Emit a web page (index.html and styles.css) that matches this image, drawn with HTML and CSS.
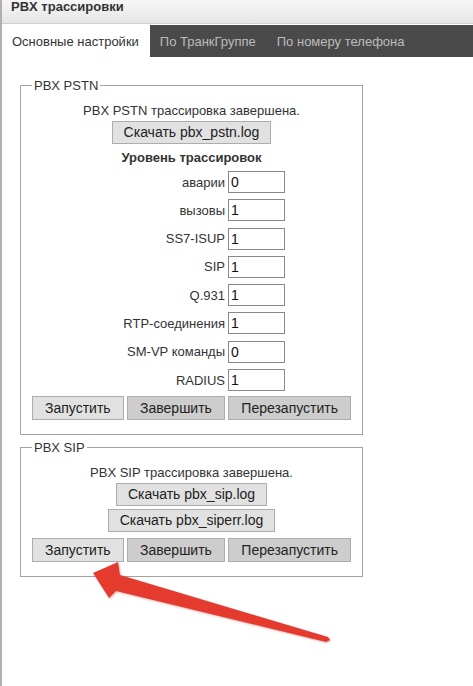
FILE: index.html
```html
<!DOCTYPE html>
<html lang="ru">
<head>
  <meta charset="UTF-8">
  <meta name="viewport" content="width=device-width, initial-scale=1.0">
  <title>PBX трассировки</title>
  <link rel="stylesheet" href="styles.css">
</head>
<body>

  <div class="window">
    <div class="window-title">PBX трассировки</div>

    <ul class="tabs">
      <li class="tab active">Основные настройки</li>
      <li class="tab">По ТранкГруппе</li>
      <li class="tab">По номеру телефона</li>
    </ul>

    <div class="tab-body">
      <fieldset class="group">
        <legend>PBX PSTN</legend>
        <p class="status">PBX PSTN трассировка завершена.</p>
        <button class="btn download">Скачать pbx_pstn.log</button>
        <h4 class="levels-title">Уровень трассировок</h4>
        <div class="levels">
          <label>аварии</label><input type="text" value="0">
          <label>вызовы</label><input type="text" value="1">
          <label>SS7-ISUP</label><input type="text" value="1">
          <label>SIP</label><input type="text" value="1">
          <label>Q.931</label><input type="text" value="1">
          <label>RTP-соединения</label><input type="text" value="1">
          <label>SM-VP команды</label><input type="text" value="0">
          <label>RADIUS</label><input type="text" value="1">
        </div>
        <div class="actions">
          <button class="btn start">Запустить</button>
          <button class="btn">Завершить</button>
          <button class="btn">Перезапустить</button>
        </div>
      </fieldset>

      <fieldset class="group">
        <legend>PBX SIP</legend>
        <p class="status">PBX SIP трассировка завершена.</p>
        <button class="btn download">Скачать pbx_sip.log</button>
        <button class="btn download">Скачать pbx_siperr.log</button>
        <div class="actions">
          <button class="btn start">Запустить</button>
          <button class="btn">Завершить</button>
          <button class="btn">Перезапустить</button>
        </div>
      </fieldset>
    </div>
  </div>

  <!-- annotation arrow pointing at "Запустить" -->
  <svg class="arrow" width="473" height="686" viewBox="0 0 473 686">
    <polygon points="93,573 118,562 120,575 328,637 330,640 326,642 116,591 109,598"/>
  </svg>

</body>
</html>
```

FILE: styles.css
```css
body {
  margin: 0;
  background: #fff;
  color: #333;
  font-family: "Liberation Sans", Arial, sans-serif;
  font-size: 13px;
}

.window {
  min-height: 100vh;
  border-left: 2px solid #b0b0b0;
}

.window-title {
  height: 23px;
  padding-left: 9px;
  line-height: 13px;
  font-weight: bold;
  color: #333;
  background: linear-gradient(#f6f6f6, #e6e6e6);
  border-bottom: 1px solid #cfcfcf;
}

.tabs {
  display: flex;
  margin: 1px 0 0;
  padding: 0;
  list-style: none;
  height: 32px;
  background: #4a4a4a;
}

.tab {
  display: flex;
  align-items: center;
  padding: 0 11px 0 10px;
  color: #bcbcbc;
}

.tab.active {
  background: #fff;
  color: #333;
}

.tab-body {
  padding: 21px 0 0 18px;
}

.group {
  box-sizing: border-box;
  width: 343px;
  margin: 0;
  padding: 10px 11px 14px;
  border: 1px solid #a3a3a3;
}

.group + .group {
  margin-top: 5px;
}

.group legend {
  padding: 0 2px;
  line-height: 15px;
  color: #333;
}

.status {
  margin: 0;
  line-height: 15px;
  text-align: center;
}

.btn {
  height: 23px;
  padding: 0 11px;
  font-family: "Liberation Sans", Arial, sans-serif;
  font-size: 14px;
  line-height: 17px;
  color: #222;
  background: #cdcdcd;
  border: 1px solid #adadad;
}

.btn.download {
  display: block;
  margin: 3px auto 0;
  background: #e1e1e1;
}

.btn.start {
  background: #e1e1e1;
}

.levels-title {
  margin: 6px 0 0;
  line-height: 15px;
  font-size: 13px;
  text-align: center;
}

.levels {
  display: grid;
  grid-template-columns: 1fr 57px;
  column-gap: 3px;
  row-gap: 6.3px;
  align-items: center;
  margin: 6px 66px 0 0;
}

.levels label {
  text-align: right;
  line-height: 15px;
}

.levels input {
  box-sizing: border-box;
  width: 57px;
  height: 22px;
  margin: 0;
  padding: 0 2px;
  font-family: "Liberation Sans", Arial, sans-serif;
  font-size: 14px;
  color: #111;
  border: 1px solid #888;
}

.actions {
  display: flex;
  justify-content: space-between;
  margin-top: 5px;
}

.actions .btn {
  height: 24px;
  padding: 0 12px;
}

.group + .group .actions {
  margin-top: 6px;
}

.arrow {
  position: absolute;
  left: 0;
  top: 0;
  pointer-events: none;
}

.arrow polygon {
  fill: #e53b2e;
  filter: drop-shadow(1px 1px 1px rgba(120, 0, 0, 0.3));
}
```
